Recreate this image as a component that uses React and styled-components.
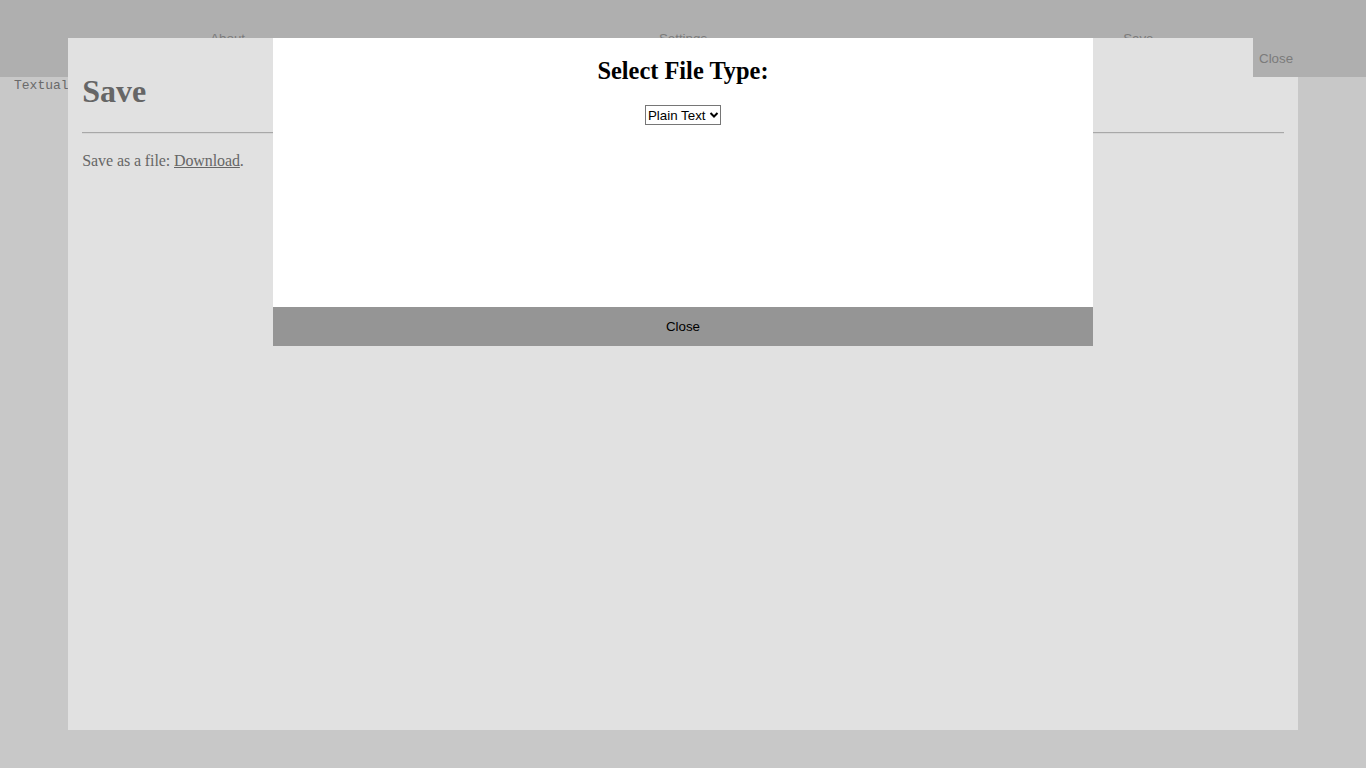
import React, { useState } from "react";
import styled, { createGlobalStyle } from "styled-components";

const GlobalStyle = createGlobalStyle`
  html, body {
    margin: 0;
    background: #c8c8c8;
    height: 100%;
  }
`;

const chevron =
  "url(\"data:image/svg+xml;utf8,<svg xmlns='http://www.w3.org/2000/svg' width='10' height='8' viewBox='0 0 10 8'><path d='M1.5 2 L5 5.5 L8.5 2' fill='none' stroke='black' stroke-width='2'/></svg>\")";

export default function App() {
  const [fileType, setFileType] = useState("plain");

  return (
    <>
      <GlobalStyle />
      <StyledHeader>
        <StyledNavButton>About</StyledNavButton>
        <StyledNavButton>Settings</StyledNavButton>
        <StyledNavButton>Save</StyledNavButton>
      </StyledHeader>
      <StyledEditorText>Textual</StyledEditorText>

      <StyledSavePanel>
        <h1>Save</h1>
        <hr />
        <p>
          Save as a file: <a href="#download">Download</a>.
        </p>
      </StyledSavePanel>
      <StyledPanelClose>Close</StyledPanelClose>

      <StyledDialog>
        <StyledDialogBody>
          <h2>Select File Type:</h2>
          <div>
            <StyledSelect
              value={fileType}
              onChange={(e) => setFileType(e.target.value)}
            >
              <option value="plain">Plain Text</option>
              <option value="html">HTML</option>
              <option value="md">Markdown</option>
            </StyledSelect>
          </div>
        </StyledDialogBody>
        <StyledDialogClose>Close</StyledDialogClose>
      </StyledDialog>
    </>
  );
}

const StyledHeader = styled.div`
  height: 77px;
  background: #afafaf;
  display: grid;
  grid-template-columns: 1fr 1fr 1fr;
`;

const StyledNavButton = styled.button`
  border: none;
  background: transparent;
  color: #7b7b7b;
  font-family: "Liberation Sans", Arial, sans-serif;
  font-size: 13.333px;
  padding: 0;
  height: 100%;
`;

const StyledEditorText = styled.div`
  padding: 1px 14px;
  font-family: "Liberation Mono", monospace;
  font-size: 13px;
  color: #6a6a6a;
`;

const StyledSavePanel = styled.div`
  position: fixed;
  top: 5%;
  left: 5%;
  width: 90%;
  height: 90%;
  box-sizing: border-box;
  background: #e1e1e1;
  padding: 14px 14px 0;
  font-family: "Liberation Serif", serif;
  color: #666;

  h1 {
    font-size: 32px;
    margin: 21px 0 22px;
  }

  hr {
    border: none;
    border-top: 1px solid #a8a8a8;
    border-bottom: 1px solid #d6d6d6;
    margin: 0;
  }

  p {
    font-size: 16px;
    letter-spacing: -0.1px;
    margin: 18px 0;
  }

  a {
    color: #666;
  }
`;

const StyledPanelClose = styled.button`
  position: fixed;
  top: 38px;
  right: 0;
  width: 113px;
  height: 39px;
  border: none;
  background: #afafaf;
  color: #7b7b7b;
  font-family: "Liberation Sans", Arial, sans-serif;
  font-size: 13.333px;
  text-align: left;
  padding: 1px 6px 0;
`;

const StyledDialog = styled.div`
  position: fixed;
  top: 38px;
  left: 20%;
  width: 60%;
  height: 308px;
  background: #fff;
  display: flex;
  flex-direction: column;
`;

const StyledDialogBody = styled.div`
  flex: 1;
  text-align: center;
  font-family: "Liberation Serif", serif;

  h2 {
    font-size: 24.4px;
    margin: 19px 0 20px;
    color: #000;
  }
`;

const StyledSelect = styled.select`
  appearance: none;
  -webkit-appearance: none;
  box-sizing: border-box;
  width: 76px;
  height: 20px;
  padding: 0 13px 0 2px;
  font-family: "Liberation Sans", Arial, sans-serif;
  font-size: 13.333px;
  color: #000;
  background: #fff ${chevron} no-repeat right 1px center;
  border: 1px solid #767676;
  border-radius: 0;
`;

const StyledDialogClose = styled.button`
  height: 39px;
  border: none;
  background: #959595;
  color: #000;
  font-family: "Liberation Sans", Arial, sans-serif;
  font-size: 13.333px;
`;
